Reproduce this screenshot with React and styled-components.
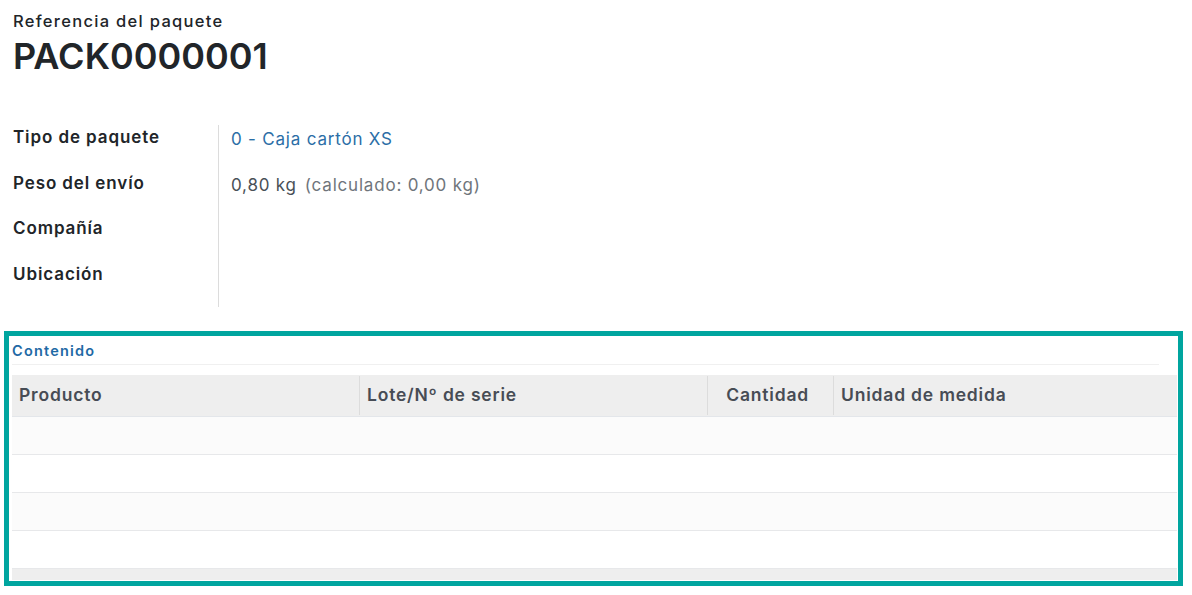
import React from 'react'
import styled, { createGlobalStyle } from 'styled-components'

const Global = createGlobalStyle`
  html, body {
    margin: 0;
    padding: 0;
    background: #ffffff;
  }
  body {
    font-family: Inter, "Noto Sans", sans-serif;
    color: #212529;
  }
`

const Page = styled.div`
  width: 1192px;
  height: 595px;
  overflow: hidden;
`

const Heading = styled.div`
  padding: 10px 0 0 13px;
`

const SubTitle = styled.div`
  font-size: 16.5px;
  font-weight: 500;
  letter-spacing: 1.3px;
  line-height: 22px;
  color: #212529;
`

const Title = styled.h1`
  margin: 0;
  font-size: 36px;
  font-weight: 600;
  line-height: 48px;
  color: #212529;
`

const Fields = styled.div`
  display: grid;
  grid-template-columns: 205px 1fr;
  margin: 45px 0 0 13px;
`

const Label = styled.div`
  height: 45.5px;
  font-size: 17px;
  font-weight: 600;
  letter-spacing: 0.9px;
  line-height: 24px;
  color: #212529;
`

const Value = styled.div`
  height: 45.5px;
  border-left: 1px solid #dcdcdc;
  padding-left: 12px;
  font-size: 17px;
  letter-spacing: 0.8px;
  line-height: 28px;
  color: ${p => (p.$link ? '#2b6ea6' : '#495057')};
`

const Muted = styled.span`
  color: #6f757b;
  margin-left: 8px;
`

const Highlight = styled.section`
  box-sizing: border-box;
  width: 1179px;
  margin: 24px 0 0 4px;
  border: 5px solid #00a59f;
  padding: 0 1px 1px 3px;
`

const TabBar = styled.div`
  margin-right: 18px;
  padding: 6px 0 5px;
  border-bottom: 1px solid #f0f0f0;
  font-size: 14.5px;
  font-weight: 600;
  letter-spacing: 1.2px;
  line-height: 17px;
  color: #1f6aa5;
`

const Table = styled.div`
  margin-top: 10px;
`

const HeadRow = styled.div`
  display: grid;
  grid-template-columns: 347px 348px 126px 1fr;
  height: 42px;
  background: #eeeeee;
  border-bottom: 1px solid #e3e6ea;
  box-sizing: border-box;
`

const HeadCell = styled.div`
  display: flex;
  align-items: center;
  justify-content: ${p => (p.$right ? 'flex-end' : 'flex-start')};
  padding: 0 ${p => (p.$right ? '24px' : '7px')} 3px 7px;
  border-left: ${p => (p.$first ? 'none' : '1px solid #dcdcdc')};
  margin: 1px 0;
  font-size: 17.5px;
  font-weight: 600;
  letter-spacing: 0.8px;
  color: #474c55;
`

const BodyRow = styled.div`
  height: 38px;
  box-sizing: border-box;
  border-bottom: 1px solid #e7e8ea;
  background: ${p => (p.$odd ? '#fbfbfb' : '#ffffff')};
`

const Footer = styled.div`
  height: 11px;
  background: #eeeeee;
`

const fields = [
  { label: 'Tipo de paquete', value: '0 - Caja cartón XS', link: true },
  { label: 'Peso del envío', value: '0,80 kg', extra: '(calculado: 0,00 kg)' },
  { label: 'Compañía', value: '' },
  { label: 'Ubicación', value: '' },
]

const columns = [
  { title: 'Producto' },
  { title: 'Lote/Nº de serie' },
  { title: 'Cantidad', right: true },
  { title: 'Unidad de medida' },
]

export default function App() {
  return (
    <>
      <Global />
      <Page>
        <Heading>
          <SubTitle>Referencia del paquete</SubTitle>
          <Title>PACK0000001</Title>
        </Heading>

        <Fields>
          {fields.map(f => (
            <React.Fragment key={f.label}>
              <Label>{f.label}</Label>
              <Value $link={f.link}>
                {f.value}
                {f.extra && <Muted>{f.extra}</Muted>}
              </Value>
            </React.Fragment>
          ))}
        </Fields>

        <Highlight>
          <TabBar>Contenido</TabBar>
          <Table>
            <HeadRow>
              {columns.map((c, i) => (
                <HeadCell key={c.title} $first={i === 0} $right={c.right}>
                  {c.title}
                </HeadCell>
              ))}
            </HeadRow>
            {[0, 1, 2, 3].map(i => (
              <BodyRow key={i} $odd={i % 2 === 0} />
            ))}
            <Footer />
          </Table>
        </Highlight>
      </Page>
    </>
  )
}
